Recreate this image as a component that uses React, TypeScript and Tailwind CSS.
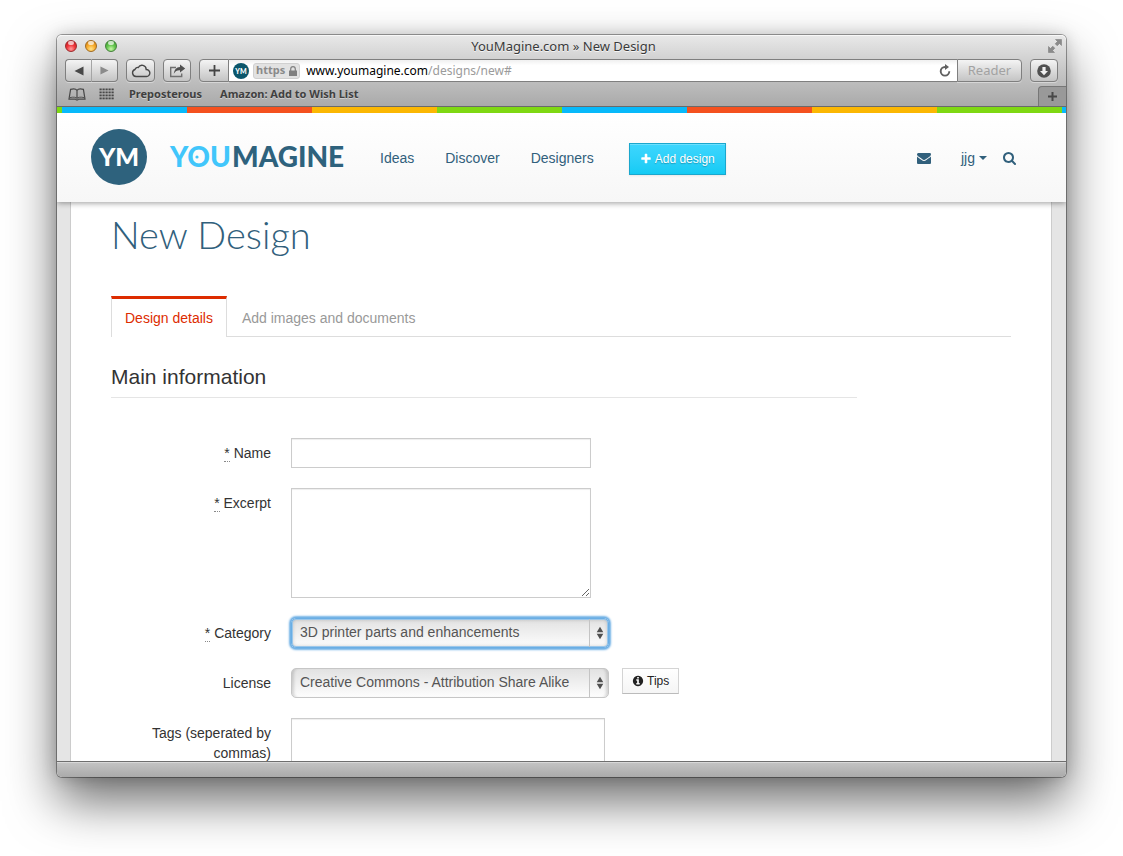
import type { ReactNode } from "react";

const chromeButton =
  "flex h-[23px] items-center justify-center rounded-[4px] border border-[#7f7f7f] bg-linear-to-b from-[#f4f4f4] to-[#c4c4c4] text-[#4a4a4a] shadow-[0_1px_0_#d6d6d6]";

const textBox =
  "block border border-[#ccc] bg-white px-2 text-sm text-[#555] shadow-[inset_0_1px_1px_rgba(0,0,0,0.07)] outline-none";

const icons = {
  plus: "M1600 736v192q0 40-28 68t-68 28h-416v416q0 40-28 68t-68 28h-192q-40 0-68-28t-28-68v-416h-416q-40 0-68-28t-28-68v-192q0-40 28-68t68-28h416v-416q0-40 28-68t68-28h192q40 0 68 28t28 68v416h416q40 0 68 28t28 68z",
  search:
    "M1152 832q0-185-131.5-316.5t-316.5-131.5-316.5 131.5-131.5 316.5 131.5 316.5 316.5 131.5 316.5-131.5 131.5-316.5zm512 832q0 52-38 90t-90 38q-54 0-90-38l-343-342q-179 124-399 124-143 0-273.5-55.5t-225-150-150-225-55.5-273.5 55.5-273.5 150-225 225-150 273.5-55.5 273.5 55.5 225 150 150 225 55.5 273.5q0 220-124 399l343 343q37 37 37 90z",
  envelope:
    "M1792 710v794q0 66-47 113t-113 47h-1472q-66 0-113-47t-47-113v-794q44 49 101 87 362 246 497 345 57 42 92.5 65.5t94.5 48 110 24.5h2q51 0 110-24.5t94.5-48 92.5-65.5q170-123 498-345 57-39 100-87zm0-294q0 79-49 151t-122 123q-376 261-468 325-10 7-42.5 31t-54 38.5-52 32.5-57.5 27-50 9h-2q-23 0-50-9t-57.5-27-52-32.5-54-38.5-42.5-31q-91-64-262-182.5t-205-142.5q-62-42-117-115.5t-55-136.5q0-78 41.5-130t118.5-52h1472q65 0 112.5 47t47.5 113z",
  info: "M1152 1376v-160q0-14-9-23t-23-9h-96v-512q0-14-9-23t-23-9h-320q-14 0-23 9t-9 23v160q0 14 9 23t23 9h96v320h-96q-14 0-23 9t-9 23v160q0 14 9 23t23 9h448q14 0 23-9t9-23zm-128-896v-160q0-14-9-23t-23-9h-192q-14 0-23 9t-9 23v160q0 14 9 23t23 9h192q14 0 23-9t9-23zm640 416q0 209-103 385.5t-279.5 279.5-385.5 103-385.5-103-279.5-279.5-103-385.5 103-385.5 279.5-279.5 385.5-103 385.5 103 279.5 279.5 103 385.5z",
};

function Icon({ name, className }: { name: keyof typeof icons; className: string }) {
  return (
    <svg viewBox="0 0 1792 1792" fill="currentColor" className={className} aria-hidden="true">
      <path d={icons[name]} />
    </svg>
  );
}

function TitleBar() {
  const lights = [
    "bg-[radial-gradient(circle_at_50%_80%,#ff9c9c,#f0353a_45%,#b3121a)] border-[#9c2a2c]",
    "bg-[radial-gradient(circle_at_50%_80%,#ffe48a,#f8ab2c_45%,#c4760c)] border-[#a06a20]",
    "bg-[radial-gradient(circle_at_50%_80%,#c9f7a8,#63c64d_45%,#3a8f2c)] border-[#43803a]",
  ];
  const names = ["Close", "Minimize", "Zoom"];
  return (
    <div className="mb-0.5 grid h-[22px] grid-cols-[1fr_auto_1fr] items-center pr-1 pl-2">
      <div className="flex gap-2">
        {lights.map((look, i) => (
          <button
            key={names[i]}
            aria-label={names[i]}
            className={`flex size-3 justify-center rounded-full border ${look}`}
          >
            <span className="h-1 w-1.5 rounded-full bg-white/70" />
          </button>
        ))}
      </div>
      <span className="text-[13px] leading-4 text-[#3a3a3a] [text-shadow:0_1px_0_#f5f5f5]">
        YouMagine.com » New Design
      </span>
      <button aria-label="Full screen" className="justify-self-end">
        <svg viewBox="0 0 14 14" className="size-3.5" fill="#8a8a8a" stroke="#777" strokeWidth="0.5">
          <path d="M7.5.5h6v6l-2-2-2.300 2.300-2-2L9.500 2.500z" />
          <path d="M6.500 13.500h-6v-6l2 2 2.300-2.300 2 2L4.500 11.500z" />
        </svg>
      </button>
    </div>
  );
}

function Toolbar() {
  return (
    <div className="flex h-[23px] items-center px-2">
      <div className="flex">
        <button aria-label="Back" className={`${chromeButton} w-[27px] rounded-r-none border-r-[#a5a5a5]`}>
          <svg viewBox="0 0 10 10" className="size-[10px]" fill="#484848">
            <path d="M9.500.5v9L.5 5z" />
          </svg>
        </button>
        <button aria-label="Forward" className={`${chromeButton} w-[26px] rounded-l-none border-l-0`}>
          <svg viewBox="0 0 10 10" className="size-[9px]" fill="#8b8b8b">
            <path d="M.5.5v9L9.500 5z" />
          </svg>
        </button>
      </div>
      <button aria-label="iCloud tabs" className={`${chromeButton} ml-2 w-[29px]`}>
        <svg viewBox="0 0 20 14" className="h-3.5 w-5" fill="none" stroke="#484848" strokeWidth="1.400">
          <path d="M5 12.500a3.600 3.600 0 0 1-1-7 2.700 2.700 0 0 1 3.300-2 4.200 4.200 0 0 1 7.900 2 3.500 3.500 0 0 1 .3 7z" />
        </svg>
      </button>
      <button aria-label="Share" className={`${chromeButton} ml-2 w-7`}>
        <svg viewBox="0 0 17 14" className="h-3.5 w-[17px]" fill="none" stroke="#707070" strokeWidth="1.400">
          <path d="M7 3.500H1.700v9h11V9.500" />
          <path d="M11 .6l5.200 3.900L11 8.500V6.300C8 6.200 6.300 7.200 4.800 9.800 5.200 5.800 7.300 3 11 2.900z" fill="#505050" stroke="none" />
        </svg>
      </button>
      <button aria-label="Add bookmark" className={`${chromeButton} ml-2 w-[30px] rounded-r-none`}>
        <svg viewBox="0 0 11 11" className="size-[11px]" stroke="#444" strokeWidth="1.800">
          <path d="M5.500 0v11M0 5.500h11" />
        </svg>
      </button>
      <div className="flex h-[23px] min-w-0 flex-1 items-center border-y border-[#7f7f7f] bg-linear-to-b from-[#f0f0f0] to-white to-25% pl-1">
        <svg viewBox="0 0 16 16" className="size-4 shrink-0">
          <circle cx="8" cy="8" r="8" fill="#0b566b" />
          <text x="8" y="10.500" textAnchor="middle" fontSize="7" fontWeight="900" fill="#fff" fontFamily="Lato, sans-serif">
            YM
          </text>
        </svg>
        <span className="ml-1 flex h-4 shrink-0 items-center gap-1 rounded-[3px] border border-[#d0d0d0] bg-[#e2e2e2] px-0.5 text-[11px] font-bold text-[#8a8a8a]">
          https
          <svg viewBox="0 0 8 10" className="h-2.5 w-2" fill="#808080">
            <path d="M0 4.500h8V10H0z" />
            <path d="M1.700 5V3a2.300 2.300 0 0 1 4.600 0v2" fill="none" stroke="#808080" strokeWidth="1.200" />
          </svg>
        </span>
        <span className="ml-1.5 min-w-0 flex-1 truncate text-xs text-black">
          www.youmagine.com<span className="text-[#9b9b9b]">/designs/new#</span>
        </span>
        <button aria-label="Reload" className="mr-1.5">
          <svg viewBox="0 0 12 13" className="h-[13px] w-3" fill="none" stroke="#606060" strokeWidth="1.900">
            <path d="M10.300 7.300A4.300 4.300 0 1 1 6 3h1" />
            <path d="M6 0l4 3-4 3z" fill="#606060" stroke="none" />
          </svg>
        </button>
      </div>
      <button className={`${chromeButton} w-[65px] rounded-l-none text-[13px] text-[#a2a2a2]`}>Reader</button>
      <button aria-label="Downloads" className={`${chromeButton} ml-2 w-7`}>
        <svg viewBox="0 0 14 14" className="size-3.5">
          <circle cx="7" cy="7" r="6.800" fill="#505050" />
          <path d="M5.400 3h3.200v4h2.400L7 11.200 3 7h2.400z" fill="#f0f0f0" />
        </svg>
      </button>
    </div>
  );
}

function BookmarksBar() {
  return (
    <div className="flex h-[25px] items-center border-b border-[#6a6a6a] pl-[11px] text-[11px] font-bold text-[#404040] [text-shadow:0_1px_0_#cfcfcf]">
      <button aria-label="Bookmarks">
        <svg viewBox="0 0 18 13" className="h-[13px] w-[18px]" fill="none" stroke="#484848" strokeWidth="1.200">
          <path d="M9 2.300C8 .9 5 .6 2.600 1.300L1 11.200h6.500c.6 0 .6.800 1 .8h1c.4 0 .4-.8 1-.8H17L15.400 1.300C13 .6 10 .9 9 2.300zM9 2.300v8" />
          <path d="M2 9.600c3-.8 6-.5 7 .8 1-1.300 4-1.600 7-.8" strokeWidth="0.900" />
        </svg>
      </button>
      <button aria-label="Top sites" className="ml-[13px]">
        <svg viewBox="0 0 16 12" className="h-3 w-4" fill="#484848">
          {[0, 3, 6, 9].map((y) =>
            [0, 3, 6, 9, 12].map((x) => <rect key={`${x}-${y}`} x={x + 0.5} y={y + 0.5} width="2.200" height="1.800" />),
          )}
        </svg>
      </button>
      <a href="#preposterous" className="ml-3.5">
        Preposterous
      </a>
      <a href="#wishlist" className="ml-[18px]">
        Amazon: Add to Wish List
      </a>
      <button
        aria-label="New tab"
        className="ml-auto flex h-5 w-7 items-center justify-center self-end rounded-tl-[4px] border-t border-l border-[#777] bg-[#999]"
      >
        <svg viewBox="0 0 9 9" className="size-[9px]" stroke="#484848" strokeWidth="2">
          <path d="M4.500 0v9M0 4.500h9" />
        </svg>
      </button>
    </div>
  );
}

function SiteHeader() {
  return (
    <header className="relative z-10 shadow-[0_1px_6px_rgba(0,0,0,0.4)]">
      <div className="h-1.5 bg-[repeating-linear-gradient(to_right,#08b9fa_0,#08b9fa_125px,#f4511f_125px,#f4511f_250px,#fbb703_250px,#fbb703_375px,#7fd813_375px,#7fd813_500px)] bg-[position:5px_0] bg-[size:500px_6px]" />
      <div className="flex items-center bg-linear-to-b from-white to-[#f7f7f7] pt-4 pr-[49px] pb-[17px] pl-[34px] text-sm text-[#31607c]">
        <a href="#home" aria-label="YouMagine home" className="flex items-center">
          <svg viewBox="0 0 256 56" className="h-14 w-64" fontFamily="Lato, sans-serif" fontWeight="900">
            <circle cx="28" cy="28" r="28" fill="#2e627d" />
            <text x="28" y="37" fontSize="25" textAnchor="middle" fill="#fff">
              YM
            </text>
            <text x="79" y="38" fontSize="28" fill="#41c6fb">
              YOU
            </text>
            <circle cx="106" cy="28" r="1.600" fill="#41c6fb" />
            <text x="141" y="38" fontSize="28" fill="#2e627d">
              MAGINE
            </text>
          </svg>
        </a>
        <nav className="ml-[33px] flex items-center gap-[31px] pt-0.5">
          <a href="#ideas">Ideas</a>
          <a href="#discover">Discover</a>
          <a href="#designers">Designers</a>
        </nav>
        <button className="mt-[3px] ml-[35px] flex h-8 items-center gap-[3px] border border-[#1ba7cd] bg-linear-to-b from-[#3dd6fe] to-[#13cbf4] px-2.5 text-xs text-white shadow-[inset_0_1px_0_rgba(255,255,255,0.25),0_1px_2px_rgba(0,0,0,0.08)] [text-shadow:0_1px_1px_rgba(0,0,0,0.25)]">
          <Icon name="plus" className="size-3" />
          Add design
        </button>
        <div className="ml-auto flex items-center pt-0.5">
          <a href="#messages" aria-label="Messages">
            <Icon name="envelope" className="size-3.5" />
          </a>
          <button className="ml-[30px] flex items-center gap-1">
            jjg
            <svg viewBox="0 0 8 4" className="h-1 w-2" fill="currentColor">
              <path d="M0 0h8L4 4z" />
            </svg>
          </button>
          <button aria-label="Search" className="ml-4">
            <Icon name="search" className="size-3.5" />
          </button>
        </div>
      </div>
    </header>
  );
}

function Field({ id, label, required, children }: { id: string; label: string; required?: boolean; children: ReactNode }) {
  return (
    <div className="mb-5 grid grid-cols-[160px_1fr] gap-5">
      <label htmlFor={id} className="pt-[5px] text-right">
        {required && (
          <abbr title="required" className="border-b border-dotted border-[#888] no-underline">
            *
          </abbr>
        )}
        {required && " "}
        {label}
      </label>
      <div className="flex items-start">{children}</div>
    </div>
  );
}

function Picker({ id, value, focused }: { id: string; value: string; focused?: boolean }) {
  return (
    <div className="relative">
      <select
        id={id}
        defaultValue={value}
        className={`block h-[30px] w-[318px] appearance-none rounded-[5px] border bg-linear-to-b from-[#e2e2e2] to-[#fdfdfd] pr-8 pb-0.5 pl-2 text-sm text-[#555] outline-none ${
          focused
            ? "border-[#6aaee4] shadow-[0_0_0_1px_#74b3e6,0_0_2px_2px_#74b3e6,inset_0_0_0_1px_#9cc7ea,inset_0_0_4px_rgba(0,0,0,0.25)]"
            : "border-[#c6c6c6] shadow-[inset_4px_0_3px_-2px_rgba(0,0,0,0.15),inset_-4px_0_3px_-2px_rgba(0,0,0,0.15)]"
        }`}
      >
        <option>{value}</option>
      </select>
      <span className="pointer-events-none absolute inset-y-px right-0 flex w-5 items-center justify-center border-l border-[#c4c4c4]">
        <svg viewBox="0 0 8 14" className="h-3.5 w-2" fill="#505050">
          <path d="M4 .8L7.300 6.200H.7zM4 13.200L7.300 7.800H.7z" />
        </svg>
      </span>
    </div>
  );
}

function DesignForm() {
  return (
    <main className="mr-3.5 ml-[13px] min-h-full border-x border-[#ccc] bg-white px-10 pt-3 text-sm leading-5 text-[#333]">
      <h1 className="font-[Lato] text-[38px] leading-10 font-light text-[#31607c]">New Design</h1>
      <div className="mt-[42px] flex border-b border-[#ddd]">
        <a
          href="#details"
          className="-mb-px border-x border-t-3 border-x-[#ddd] border-t-[#dd2c00] bg-white px-[13px] pt-[9px] pb-[9px] text-[#dd2c00]"
        >
          Design details
        </a>
        <a href="#images" className="px-[15px] pt-3 pb-2 text-[#999]">
          Add images and documents
        </a>
      </div>
      <form className="max-w-[746px]">
        <h2 className="mt-5 mb-10 border-b border-[#e5e5e5] text-[21px] leading-10">Main information</h2>
        <Field id="name" label="Name" required>
          <input id="name" type="text" className={`${textBox} h-[30px] w-[300px]`} />
        </Field>
        <Field id="excerpt" label="Excerpt" required>
          <textarea id="excerpt" className={`${textBox} h-[110px] w-[300px]`} />
        </Field>
        <Field id="category" label="Category" required>
          <Picker id="category" value="3D printer parts and enhancements" focused />
        </Field>
        <Field id="license" label="License">
          <Picker id="license" value="Creative Commons - Attribution Share Alike" />
          <button
            type="button"
            className="ml-[13px] flex h-[26px] items-center gap-[3px] border border-[#d4d4d4] border-b-[#bbb] bg-linear-to-b from-white to-[#f5f5f5] px-[9px] text-xs text-[#222]"
          >
            <Icon name="info" className="size-3" />
            Tips
          </button>
        </Field>
        <Field id="tags" label="Tags (seperated by commas)">
          <textarea id="tags" className={`${textBox} h-[110px] w-[314px]`} />
        </Field>
      </form>
    </main>
  );
}

export default function App() {
  return (
    <div className="flex h-screen flex-col overflow-hidden bg-white px-[57px] pt-[35px] pb-[79px] font-['Liberation_Sans',Arial,sans-serif]">
      <div className="flex min-h-0 flex-1 flex-col rounded-[5px] shadow-[0_0_0_1px_rgba(0,0,0,0.35),0_24px_50px_rgba(0,0,0,0.58),0_0_16px_rgba(0,0,0,0.18)]">
        <div className="rounded-t-[5px] bg-linear-to-b from-[#e9e9e9] via-[#c6c6c6] to-[#a9a9a9] font-['Noto_Sans',sans-serif] shadow-[inset_0_1px_0_#f8f8f8]">
          <TitleBar />
          <Toolbar />
          <BookmarksBar />
        </div>
        <div className="min-h-0 flex-1 overflow-hidden bg-[#e5e5e5]">
          <SiteHeader />
          <DesignForm />
        </div>
        <div className="h-4 rounded-b-[5px] border-t border-[#6e6e6e] bg-linear-to-b from-[#c4c4c4] to-[#aaa] shadow-[inset_0_1px_0_#d8d8d8]" />
      </div>
    </div>
  );
}
